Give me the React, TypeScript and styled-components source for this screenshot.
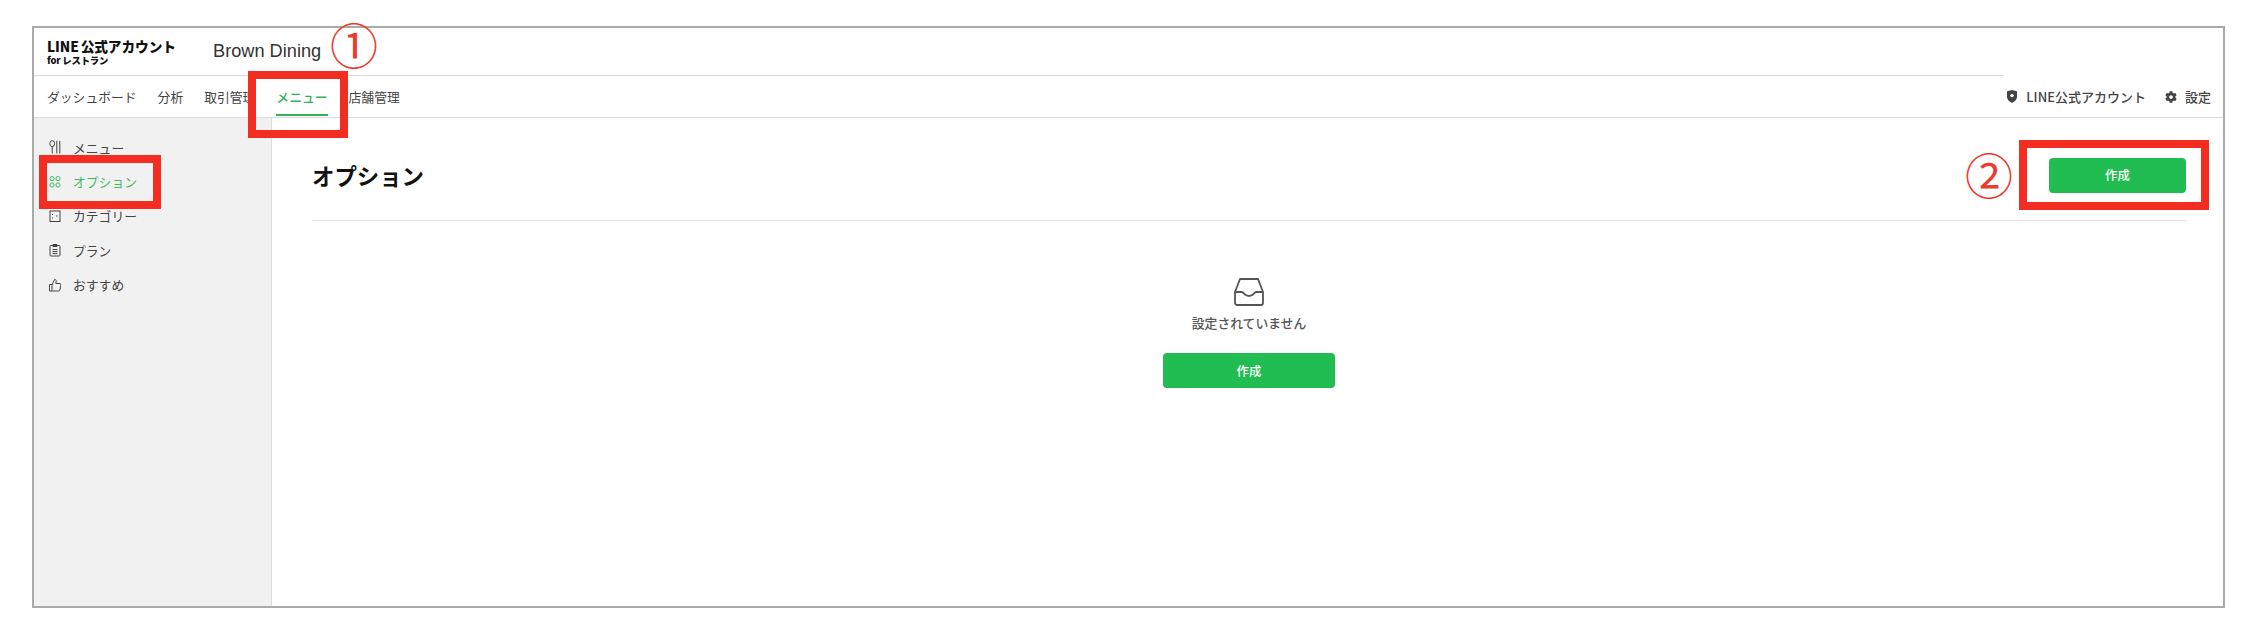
import React from "react";
import styled, { createGlobalStyle } from "styled-components";
import { FaCog } from "react-icons/fa";

const GlobalStyle = createGlobalStyle`
  html, body {
    margin: 0;
    padding: 0;
    background: #fff;
    font-family: "Noto Sans CJK JP", "Noto Sans", sans-serif;
  }
  * {
    box-sizing: border-box;
  }
`;

const Page = styled.div`
  width: 2254px;
  height: 644px;
  padding: 26px 29px 36px 32px;
`;

const Frame = styled.div`
  position: relative;
  height: 100%;
  border: 2px solid #aaa;
  display: flex;
  flex-direction: column;
`;

const Header = styled.header`
  width: 1970px;
  height: 48px;
  flex: none;
  border-bottom: 1px solid #d9d9d9;
  display: flex;
  align-items: center;
  padding-left: 13px;
`;

const Logo = styled.div`
  width: 166px;
  color: #111;
  font-weight: 900;
  display: flex;
  flex-direction: column;
`;

const LogoMain = styled.span`
  font-size: 13.7px;
  line-height: 17px;
  letter-spacing: -0.1px;
  word-spacing: -1px;
  white-space: nowrap;
`;

const LogoSub = styled.span`
  font-size: 9.4px;
  line-height: 11px;
  letter-spacing: -0.2px;
  white-space: nowrap;
`;

const ShopName = styled.div`
  font-family: "Liberation Sans", sans-serif;
  font-size: 18.2px;
  color: #333;
`;

const Nav = styled.nav`
  height: 42px;
  flex: none;
  border-bottom: 1px solid #dcdcdc;
  display: flex;
  align-items: stretch;
  padding: 0 12px 0 13px;
  gap: 21px;
`;

const NavItem = styled.a<{ $active?: boolean }>`
  position: relative;
  display: flex;
  align-items: center;
  font-size: 12.8px;
  color: ${(p) => (p.$active ? "#2fb457" : "#444")};
  font-weight: ${(p) => (p.$active ? 500 : 400)};
  white-space: nowrap;

  ${(p) =>
    p.$active &&
    `&::after {
      content: "";
      position: absolute;
      left: 0;
      right: 0;
      bottom: 1px;
      height: 2px;
      background: #2fb457;
    }`}
`;

const NavRight = styled.div`
  margin-left: auto;
  display: flex;
  align-items: center;
  gap: 19px;
`;

const NavLink = styled.a`
  display: flex;
  align-items: center;
  gap: 8px;
  font-size: 13px;
  font-weight: 500;
  color: #444;
  white-space: nowrap;
`;

const Body = styled.div`
  flex: 1;
  display: flex;
  min-height: 0;
`;

const Sidebar = styled.aside`
  width: 238px;
  flex: none;
  background: #f1f1f1;
  border-right: 1px solid #dedede;
  padding-top: 12px;
`;

const SideItem = styled.a<{ $active?: boolean }>`
  height: 34.4px;
  display: flex;
  align-items: center;
  gap: 12px;
  padding-left: 15px;
  font-size: 12.8px;
  color: ${(p) => (p.$active ? "#3dbb63" : "#444")};
`;

const SideIcon = styled.svg`
  width: 12px;
  height: 14px;
  flex: none;
  fill: none;
  stroke: currentColor;
  stroke-width: 1;
`;

const Main = styled.main`
  flex: 1;
  padding: 0 37px 0 40px;
`;

const TitleRow = styled.div`
  height: 103px;
  border-bottom: 1px solid #e0e0e0;
  display: flex;
  align-items: center;
  justify-content: space-between;
  padding-top: 12px;
`;

const Title = styled.h1`
  margin: 0;
  font-size: 22.4px;
  font-weight: 700;
  color: #111;
`;

const PrimaryButton = styled.button<{ $width: number }>`
  width: ${(p) => p.$width}px;
  height: 35px;
  border: none;
  border-radius: 4px;
  background: #22bd52;
  color: #fff;
  font-family: inherit;
  font-size: 12.4px;
  font-weight: 500;
`;

const Empty = styled.div`
  display: flex;
  flex-direction: column;
  align-items: center;
  padding-top: 56px;
`;

const EmptyIcon = styled.svg`
  width: 30px;
  height: 29px;
  fill: none;
  stroke: #555;
  stroke-width: 1.8;
  stroke-linejoin: round;
`;

const EmptyText = styled.p`
  margin: 8px 0 21px;
  font-size: 12.8px;
  font-weight: 500;
  line-height: 18px;
  color: #555;
`;

const RedBox = styled.div<{ $x: number; $y: number; $w: number; $h: number }>`
  position: absolute;
  left: ${(p) => p.$x}px;
  top: ${(p) => p.$y}px;
  width: ${(p) => p.$w}px;
  height: ${(p) => p.$h}px;
  border: 8px solid #f32d21;
`;

const Marker = styled.span<{ $x: number; $y: number }>`
  position: absolute;
  left: ${(p) => p.$x}px;
  top: ${(p) => p.$y}px;
  font-size: 48px;
  font-weight: 400;
  line-height: 48px;
  color: #ec3b2c;
`;

const ShieldIcon = () => (
  <svg width="12" height="13" viewBox="0 0 12 13">
    <path d="M1 1.2 6 0l5 1.2v5.6c0 2.9-2.2 4.9-5 6.2-2.8-1.3-5-3.3-5-6.2z" fill="#444" />
    <circle cx="6" cy="5.6" r="1.7" fill="#fff" />
  </svg>
);

const sideItems = [
  {
    label: "メニュー",
    icon: (
      <>
        <ellipse cx="3.2" cy="3.6" rx="2.4" ry="3" />
        <path d="M3.2 6.6V13.5" />
        <path d="M7.8 .8v12.7M10.8 .8v12.7" />
      </>
    ),
  },
  {
    label: "オプション",
    active: true,
    icon: (
      <>
        <circle cx="3" cy="3.6" r="2.1" />
        <circle cx="9" cy="3.6" r="2.1" />
        <circle cx="3" cy="10" r="2.1" />
        <circle cx="9" cy="10" r="2.1" />
      </>
    ),
  },
  {
    label: "カテゴリー",
    icon: (
      <>
        <rect x="1" y="2" width="10" height="10.5" />
        <path d="M3.5 5v1M3.5 8.5v1M7 7h1.5" />
      </>
    ),
  },
  {
    label: "プラン",
    icon: (
      <>
        <rect x="1" y="2.5" width="10" height="10.5" rx="1" />
        <path d="M4 1.5h4v2H4zM3.5 6.5h5M3.5 8.5h5M3.5 10.5h5" />
      </>
    ),
  },
  {
    label: "おすすめ",
    icon: (
      <>
        <path d="M.5 6.5h2.5v6.5H.5zM3 7l2.6-5.6c1.2 0 1.8.8 1.6 2L6.8 5.5H11c.7 0 1 .6.9 1.2l-1 5.3c-.1.6-.5 1-1.1 1H3" />
      </>
    ),
  },
];

export default function App() {
  return (
    <Page>
      <GlobalStyle />
      <Frame>
        <Header>
          <Logo>
            <LogoMain>LINE 公式アカウント</LogoMain>
            <LogoSub>for レストラン</LogoSub>
          </Logo>
          <ShopName>Brown Dining</ShopName>
        </Header>
        <Nav>
          <NavItem>ダッシュボード</NavItem>
          <NavItem>分析</NavItem>
          <NavItem>取引管理</NavItem>
          <NavItem $active>メニュー</NavItem>
          <NavItem>店舗管理</NavItem>
          <NavRight>
            <NavLink>
              <ShieldIcon />
              LINE公式アカウント
            </NavLink>
            <NavLink>
              <FaCog size={12} color="#444" />
              設定
            </NavLink>
          </NavRight>
        </Nav>
        <Body>
          <Sidebar>
            {sideItems.map((item) => (
              <SideItem key={item.label} $active={item.active}>
                <SideIcon viewBox="0 0 12 14">{item.icon}</SideIcon>
                {item.label}
              </SideItem>
            ))}
          </Sidebar>
          <Main>
            <TitleRow>
              <Title>オプション</Title>
              <PrimaryButton $width={137}>作成</PrimaryButton>
            </TitleRow>
            <Empty>
              <EmptyIcon viewBox="0 0 30 29">
                <path d="M6 2h18l5 13v11a2 2 0 0 1-2 2H3a2 2 0 0 1-2-2V15z" />
                <path d="M1 15h7c2 0 2 4 7 4s5-4 7-4h7" />
              </EmptyIcon>
              <EmptyText>設定されていません</EmptyText>
              <PrimaryButton $width={172}>作成</PrimaryButton>
            </Empty>
          </Main>
        </Body>
        <RedBox $x={214} $y={43} $w={100} $h={67} />
        <RedBox $x={5} $y={127} $w={122} $h={54} />
        <RedBox $x={1985} $y={112} $w={190} $h={70} />
        <Marker $x={296} $y={-9}>①</Marker>
        <Marker $x={1931} $y={121}>②</Marker>
      </Frame>
    </Page>
  );
}
